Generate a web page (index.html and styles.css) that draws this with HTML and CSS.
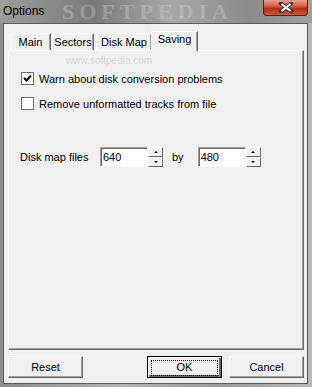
FILE: index.html
```html
<!DOCTYPE html>
<html lang="en">
<head>
    <meta charset="UTF-8">
    <meta name="viewport" content="width=device-width, initial-scale=1.0">
    <title>Options</title>
    <link rel="stylesheet" href="styles.css">
</head>
<body>
    <div class="window">
        <div class="titlebar">
            <span class="title">Options</span>
            <span class="watermark">SOFTPEDIA</span>
            <div class="close">
                <svg width="16" height="11" viewBox="0 0 16 11">
                    <path d="M3 1.5 L13 9.5 M13 1.5 L3 9.5" stroke="#3a3a3a" stroke-width="4" stroke-linecap="square"/>
                    <path d="M3.5 2 L12.5 9 M12.5 2 L3.5 9" stroke="#fff" stroke-width="2.2"/>
                </svg>
            </div>
        </div>

        <div class="client">
            <div class="tabs">
                <div class="tab tab-main">Main</div>
                <div class="tab tab-sectors">Sectors</div>
                <div class="tab tab-map">Disk Map</div>
                <div class="tab tab-saving active">Saving</div>
            </div>

            <div class="panel">
                <span class="mark">www.softpedia.com</span>

                <label class="check-row">
                    <span class="box">
                        <svg width="9" height="9" viewBox="0 0 9 9">
                            <path d="M1 4 L3.5 6.5 L8 1.5" stroke="#000" stroke-width="2" fill="none"/>
                        </svg>
                    </span>
                    Warn about disk conversion problems
                </label>
                <label class="check-row second">
                    <span class="box"></span>
                    Remove unformatted tracks from file
                </label>

                <div class="size-row">
                    <span class="label">Disk map files</span>
                    <div class="spin">
                        <div class="field">640</div>
                        <div class="arrows">
                            <div class="arrow"><span class="up"></span></div>
                            <div class="arrow"><span class="down"></span></div>
                        </div>
                    </div>
                    <span class="by">by</span>
                    <div class="spin">
                        <div class="field">480</div>
                        <div class="arrows">
                            <div class="arrow"><span class="up"></span></div>
                            <div class="arrow"><span class="down"></span></div>
                        </div>
                    </div>
                </div>
            </div>

            <div class="buttons">
                <button class="btn">Reset</button>
                <span class="spacer"></span>
                <button class="btn default"><span class="focus">OK</span></button>
                <button class="btn">Cancel</button>
            </div>
        </div>
    </div>
</body>
</html>
```

FILE: styles.css
```css
html, body {
    margin: 0;
    padding: 0;
}
body {
    width: 312px;
    height: 387px;
    overflow: hidden;
    font-family: "Liberation Sans", Arial, sans-serif;
    font-size: 11px;
    color: #000;
    background: linear-gradient(90deg, #8c8c8c, #b4b4b4 40%, #9a9a9a 70%, #b8b8b8);
}
.window {
    display: flex;
    flex-direction: column;
    height: 387px;
}
.titlebar {
    position: relative;
    height: 23px;
    flex: none;
    background: linear-gradient(90deg, #9c9c9c, #7a7a7a 30%, #a8a8a8 55%, #8a8a8a 80%, #a0a0a0);
}
.title {
    position: relative;
    z-index: 2;
    display: block;
    padding: 3px 0 0 3px;
    font-size: 12px;
    line-height: 16px;
}
.watermark {
    position: absolute;
    left: 62px;
    top: 1px;
    line-height: 22px;
    font-family: "Liberation Serif", serif;
    font-size: 22px;
    font-weight: bold;
    letter-spacing: 5px;
    color: rgba(225, 225, 225, 0.3);
}
.close {
    position: absolute;
    top: 0;
    left: 263px;
    width: 45px;
    height: 16px;
    box-sizing: border-box;
    border: 1px solid #5a1a10;
    border-top: none;
    border-radius: 0 0 4px 4px;
    background: linear-gradient(#e6a08c, #cf5a3c 45%, #b52c12 55%, #d0583a);
    display: flex;
    align-items: center;
    justify-content: center;
}
.client {
    flex: 1;
    margin: 0 4px 3px 3px;
    border: 1px solid #5c5c5c;
    background: #f0f0f0;
    display: flex;
    flex-direction: column;
}
.tabs {
    display: flex;
    align-items: flex-end;
    margin: 7px 0 0 6px;
    height: 19px;
}
.tab {
    height: 17px;
    box-sizing: border-box;
    border: 1px solid #fff;
    border-bottom: none;
    border-right: 1px solid #696969;
    box-shadow: inset -1px 0 0 #a0a0a0;
    padding-top: 1px;
    line-height: 15px;
    text-align: center;
    background: #f0f0f0;
}
.tab-main {
    width: 41px;
    margin-right: 1px;
}
.tab-sectors {
    width: 42px;
    margin-right: 2px;
}
.tab-map {
    width: 56px;
}
.tab-saving {
    width: 47px;
}
.tab.active {
    position: relative;
    z-index: 1;
    height: 20px;
    padding-top: 0;
    margin-left: -1px;
    margin-bottom: -1px;
}
.panel {
    position: relative;
    height: 300px;
    margin: 0 3px 0 4px;
    box-sizing: border-box;
    border: 1px solid #fff;
    border-right-color: #696969;
    border-bottom-color: #696969;
    box-shadow: inset -1px -1px 0 #a0a0a0;
    padding: 21px 0 0 12px;
}
.mark {
    position: absolute;
    left: 57px;
    top: 4px;
    font-size: 10px;
    color: rgba(160, 160, 160, 0.35);
}
.check-row {
    display: flex;
    align-items: center;
    height: 13px;
    gap: 5px;
}
.check-row.second {
    margin-top: 12px;
}
.box {
    width: 13px;
    height: 13px;
    box-sizing: border-box;
    border: 1px solid #707070;
    background: #fff;
    display: flex;
    align-items: center;
    justify-content: center;
    flex: none;
}
.size-row {
    display: flex;
    align-items: center;
    margin-top: 37px;
    margin-left: -1px;
}
.label {
    width: 80px;
}
.spin {
    display: flex;
}
.field {
    width: 48px;
    height: 20px;
    box-sizing: border-box;
    border: 1px solid #a0a0a0;
    border-right-color: #fff;
    border-bottom-color: #fff;
    box-shadow: inset 1px 1px 0 #696969;
    background: #fff;
    padding: 2px 0 0 2px;
    line-height: 15px;
}
.arrows {
    display: flex;
    flex-direction: column;
    width: 15px;
}
.arrow {
    height: 10px;
    box-sizing: border-box;
    border: 1px solid #fff;
    border-right-color: #696969;
    border-bottom-color: #696969;
    background: #f0f0f0;
    display: flex;
    align-items: center;
    justify-content: center;
}
.up, .down {
    width: 0;
    height: 0;
    border-left: 2px solid transparent;
    border-right: 2px solid transparent;
}
.up {
    border-bottom: 2px solid #000;
}
.down {
    border-top: 2px solid #000;
}
.by {
    margin: 0 14px 0 9px;
}
.buttons {
    display: flex;
    margin: 6px 3px 0 4px;
}
.spacer {
    flex: 1;
}
.btn {
    width: 75px;
    height: 22px;
    box-sizing: border-box;
    margin: 0;
    padding: 0;
    font-family: inherit;
    font-size: 11px;
    color: #000;
    background: #f0f0f0;
    border: 1px solid #fff;
    border-right-color: #696969;
    border-bottom-color: #696969;
    box-shadow: inset -1px -1px 0 #a0a0a0;
}
.btn.default {
    margin-right: 7px;
    border: 1px solid #000;
    box-shadow: inset 1px 1px 0 #fff, inset -2px -2px 0 #696969;
    padding: 3px;
}
.focus {
    display: block;
    height: 14px;
    border: 1px dotted #000;
    line-height: 13px;
}
```
